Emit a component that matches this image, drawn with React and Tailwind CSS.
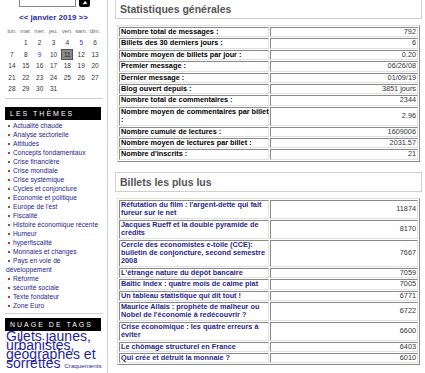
import React from 'react';

// Blog sidebar (calendar + themes + tag cloud) and the stats page body.

const weeks = [
  ['', '1', '2', '3', '4', '5', '6'],
  ['7', '8', '9', '10', '11', '12', '13'],
  ['14', '15', '16', '17', '18', '19', '20'],
  ['21', '22', '23', '24', '25', '26', '27'],
  ['28', '29', '30', '31', '', '', ''],
];

const dayNames = ['lun.', 'mar.', 'mer.', 'jeu.', 'ven.', 'sam.', 'dim.'];
const linkedDays = ['5', '9'];

const themes = [
  'Actualité chaude',
  'Analyse sectorielle',
  'Attitudes',
  'Concepts fondamentaux',
  'Crise financière',
  'Crise mondiale',
  'Crise systémique',
  'Cycles et conjoncture',
  'Economie et politique',
  "Europe de l'est",
  'Fiscalité',
  'Histoire économique récente',
  'Humeur',
  'hyperfiscalité',
  'Monnaies et changes',
  'Pays en voie de développement',
  'Réforme',
  'sécurité sociale',
  'Texte fondateur',
  'Zone Euro',
];

const stats = [
  [['Nombre total de messages :'], '792'],
  [['Billets des 30 derniers jours :'], '6'],
  [['Nombre moyen de billets par jour :'], '0.20'],
  [['Premier message :'], '06/26/08'],
  [['Dernier message :'], '01/09/19'],
  [['Blog ouvert depuis :'], '3851 jours'],
  [['Nombre total de commentaires :'], '2344'],
  [['Nombre moyen de commentaires par billet', ':'], '2.96'],
  [['Nombre cumulé de lectures :'], '1609006'],
  [['Nombre moyen de lectures par billet :'], '2031.57'],
  [["Nombre d'inscrits :"], '21'],
];

const topPosts = [
  [["Réfutation du film : l'argent-dette qui fait", 'fureur sur le net'], '11874'],
  [['Jacques Rueff et la double pyramide de', 'crédits'], '8170'],
  [
    [
      'Cercle des economistes e-toile (CCE):',
      'bulletin de conjoncture, second semestre',
      '2008',
    ],
    '7667',
  ],
  [["L'étrange nature du dépôt bancaire"], '7059'],
  [['Baltic Index : quatre mois de calme plat'], '7005'],
  [['Un tableau statistique qui dit tout !'], '6771'],
  [['Maurice Allais : prophète de malheur ou', "Nobel de l'économie à redécouvrir ?"], '6722'],
  [['Crise économique : les quatre erreurs à', 'éviter'], '6600'],
  [['Le chômage structurel en France'], '6403'],
  [['Qui crée et détruit la monnaie ?'], '6010'],
];

function SideTitle({ children }) {
  return (
    <div className="mx-[5px] h-[13px] w-[96px] bg-black pl-[5px] text-[7px] leading-[13px] tracking-[2px] text-white">
      {children}
    </div>
  );
}

function PanelTitle({ children, className = '' }) {
  return (
    <div
      className={`h-[20px] border border-[#cfcfcf] bg-white pl-[4px] text-[10.5px] font-bold leading-[18px] text-[#555] ${className}`}
    >
      {children}
    </div>
  );
}

function DataTable({ rows, link }) {
  return (
    <table className="ml-[2px] w-[303px] table-fixed border-separate border-spacing-[1px] border border-t-[#e0e0e0] border-l-[#e0e0e0] border-r-[#8a8a8a] border-b-[#8a8a8a]">
      <tbody>
        {rows.map(([label, value], i) => (
          <tr key={i}>
            <td
              className={`w-[150px] border border-t-[#8a8a8a] border-l-[#8a8a8a] border-r-[#e0e0e0] border-b-[#e0e0e0] px-[1px] py-0 align-middle text-[7.3px] font-bold leading-[8.4px] ${
                link ? 'text-[#1f1f8a]' : 'text-black'
              }`}
            >
              {label.map((line, j) => (
                <div key={j} className="whitespace-nowrap">
                  {line}
                </div>
              ))}
            </td>
            <td className="border border-t-[#8a8a8a] border-l-[#8a8a8a] border-r-[#e0e0e0] border-b-[#e0e0e0] px-[1px] py-0 text-right align-middle text-[7.3px] leading-[8.4px] text-[#333]">
              {value}
            </td>
          </tr>
        ))}
      </tbody>
    </table>
  );
}

export default function App() {
  return (
    <div className="flex h-[373px] w-[425px] overflow-hidden bg-white font-['Liberation_Sans',Arial,sans-serif]">
      {/* ---- Sidebar -------------------------------------------------- */}
      <div className="w-[108px] shrink-0 border-r border-[#cfcfcf]">
        <div className="mt-[-9px] flex h-[16px] items-end">
          <div className="ml-[19px] h-[14px] w-[57px] border border-[#888] bg-white" />
          <div className="ml-[3px] flex h-[16px] w-[11px] items-end justify-center rounded-[2px] bg-black pb-[2px]">
            <svg width="6" height="5" viewBox="0 0 6 5">
              <path d="M0.5 4.5 L3 1 L5.5 3.5 Z" fill="#fff" />
            </svg>
          </div>
        </div>

        <div className="mt-[5px] h-[12px] text-center text-[8px] font-bold leading-[12px] text-[#2a2aa6]">
          &lt;&lt; janvier 2019 &gt;&gt;
        </div>

        <div className="mx-[5px] mt-[2px] grid h-[10px] grid-cols-7 text-center text-[5.6px] leading-[10px] text-[#666]">
          {dayNames.map((d) => (
            <div key={d}>{d}</div>
          ))}
        </div>

        <div className="mx-[5px] mt-[1px]">
          {weeks.map((w, i) => (
            <div key={i} className="grid h-[11.5px] grid-cols-7 text-center text-[6.5px] leading-[11.5px] text-[#333]">
              {w.map((d, j) =>
                d === '11' ? (
                  <div key={j} className="flex items-center justify-center">
                    <span className="h-[11px] w-[12px] border border-[#555] bg-[#8a8a8a] leading-[9px] text-[#222]">
                      {d}
                    </span>
                  </div>
                ) : (
                  <div key={j} className={linkedDays.includes(d) ? 'text-[#3a3acc]' : ''}>
                    {d}
                  </div>
                )
              )}
            </div>
          ))}
        </div>

        <div className="mx-[5px] mt-[3px] h-px w-[98px] bg-[#cfcfcf]" />

        <div className="mt-[8px]">
          <SideTitle>LES THÈMES</SideTitle>
        </div>

        <ul className="mt-[1.5px] pl-[6px] pr-[2px] text-[6.7px] leading-[9px] text-[#26268c]">
          {themes.map((t) => (
            <li key={t}>
              <span className="ml-[2px] mr-[3px] inline-block h-[2px] w-[2px] bg-[#c0392b] align-middle" />
              {t}
            </li>
          ))}
        </ul>

        <div className="mx-[5px] mt-[3px] h-px w-[98px] bg-[#cfcfcf]" />

        <div className="mt-[3.5px]">
          <SideTitle>NUAGE DE TAGS</SideTitle>
        </div>

        <div className="mt-[1.5px] pl-[6px] text-[14px] leading-[9px] text-[#1f1f99]">
          Gilets jaunes, urbanistes, géographes et sorrettes{' '}
          <span className="text-[6.2px]">Craquements</span>
        </div>
      </div>

      {/* ---- Main content --------------------------------------------- */}
      <div className="flex-1 pl-[7px] pr-[3px]">
        <PanelTitle className="mt-[-1.5px]">Statistiques générales</PanelTitle>
        <div className="mt-[6.5px]">
          <DataTable rows={stats} />
        </div>

        <PanelTitle className="mt-[10px]">Billets les plus lus</PanelTitle>
        <div className="mt-[6px]">
          <DataTable rows={topPosts} link />
        </div>
      </div>
    </div>
  );
}
